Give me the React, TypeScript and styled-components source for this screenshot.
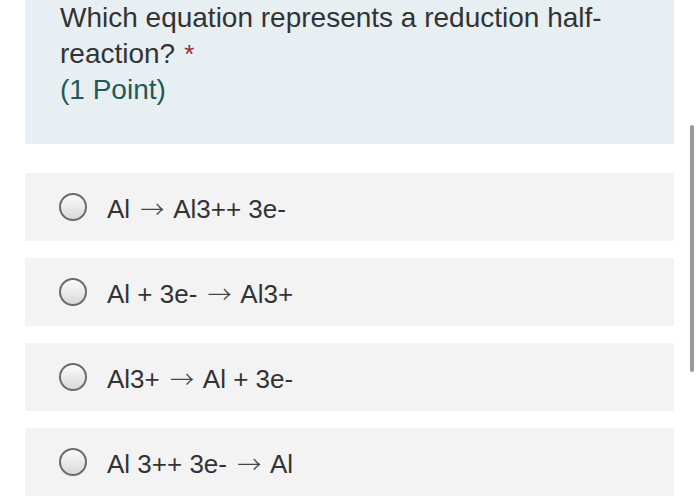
import React from "react";
import styled, { createGlobalStyle } from "styled-components";

const Global = createGlobalStyle`
  html, body { margin: 0; padding: 0; background: #ffffff; }
  body { font-family: "Liberation Sans", Arial, Helvetica, sans-serif; }
`;

const Page = styled.div`
  position: relative;
  width: 700px;
  height: 504px;
  overflow: hidden;
  padding: 0 26px 0 25px;
  box-sizing: border-box;
  display: flex;
  flex-direction: column;
  gap: 29px;
`;

const QuestionBox = styled.div`
  background: #e7eff2;
  padding: 0 35px 36px 35px;
  color: #333333;
  font-size: 28px;
  line-height: 36px;
`;

const Required = styled.span`
  color: #a4262c;
  font-size: 26px;
  line-height: 1;
  margin-left: 9px;
`;

const Points = styled.div`
  color: #1d5a58;
`;

const Options = styled.div`
  display: flex;
  flex-direction: column;
  gap: 17px;
`;

const Option = styled.label`
  display: flex;
  align-items: center;
  height: 68px;
  background: #f3f3f3;
  padding-left: 34px;
  gap: 20px;
  color: #333333;
  font-size: 26px;
`;

const Arrow = styled.span`
  font-family: "Noto Sans CJK JP", "DejaVu Sans", sans-serif;
  font-size: 24px;
  font-weight: 300;
  color: #444444;
  margin: 0 3px;
`;

const Radio = styled.span`
  width: 24px;
  height: 24px;
  border-radius: 50%;
  border: 2px solid #6b6b6b;
  background: linear-gradient(#fbfbfb, #d9d9d9);
  flex: none;
`;

const ScrollThumb = styled.div`
  position: absolute;
  left: 690px;
  top: 125px;
  width: 4px;
  height: 247px;
  border-radius: 2px;
  background: #9a9a9a;
`;

const options: [string, string][] = [
  ["Al ", " Al3++ 3e-"],
  ["Al + 3e- ", " Al3+"],
  ["Al3+ ", " Al + 3e-"],
  ["Al 3++ 3e- ", " Al"],
];

export default function App() {
  return (
    <>
      <Global />
      <Page>
        <QuestionBox>
          <div>
            Which equation represents a reduction half-reaction?
            <Required>*</Required>
          </div>
          <Points>(1 Point)</Points>
        </QuestionBox>
        <Options>
          {options.map(([a, b]) => (
            <Option key={a + b}>
              <Radio />
              <span>
                {a}
                <Arrow>{"\u2192"}</Arrow>
                {b}
              </span>
            </Option>
          ))}
        </Options>
        <ScrollThumb />
      </Page>
    </>
  );
}
